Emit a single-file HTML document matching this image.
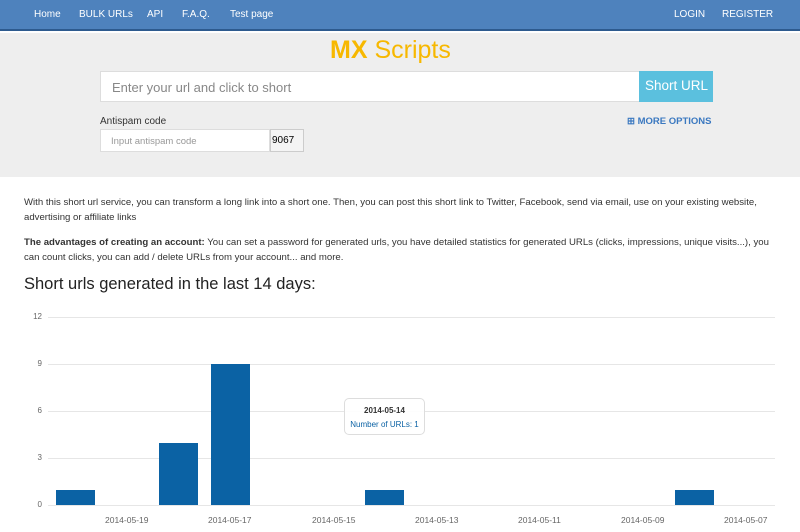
<!DOCTYPE html>
<html><head><meta charset="utf-8"><style>
*{margin:0;padding:0;box-sizing:border-box}
body{width:800px;height:532px;overflow:hidden;background:#fff;font-family:"Liberation Sans",Arial,sans-serif;position:relative}
.nav{position:absolute;left:0;top:0;width:800px;height:31px;background:#4e82bd;border-bottom:2px solid #2d5a8e}
.nav span{position:absolute;top:9px;color:#fff;font-size:10px;white-space:nowrap}
.hero{position:absolute;left:0;top:33px;width:800px;height:144px;background:#eeeeee}
.logo{position:absolute;left:330px;top:36px;font-size:25px;color:#f7b800;white-space:nowrap}
.inp{position:absolute;left:100px;top:71px;width:540px;height:31px;background:#fff;border:1px solid #ddd;font-size:13px;color:#888;padding:8px 11px}
.btn{position:absolute;left:639px;top:71px;width:74px;height:31px;background:#5bc0de;color:#fff;font-size:13.5px;padding:7px 6px;white-space:nowrap}
.small{position:absolute;font-size:10px;white-space:nowrap}
p{position:absolute;left:24px;font-size:9.6px;line-height:15px;color:#333;width:760px}
.gl{position:absolute;left:48px;width:727px;height:1px;background:#e6e6e6}
.yl{position:absolute;left:26px;width:16px;text-align:right;font-size:8px;color:#666}
.bar{position:absolute;background:#0b62a4;width:39px;bottom:27px}
.xl{position:absolute;top:515px;font-size:8.5px;color:#666}
</style></head><body>
<div class="nav">
<span style="left:34px">Home</span><span style="left:79px">BULK URLs</span><span style="left:147px">API</span><span style="left:182px">F.A.Q.</span><span style="left:230px">Test page</span>
<span style="left:674px">LOGIN</span><span style="left:722px">REGISTER</span>
</div>
<div class="hero"></div>
<div class="logo"><b style="font-weight:900">MX</b> Scripts</div>
<div class="inp">Enter your url and click to short</div>
<div class="btn">Short URL</div>
<div class="small" style="left:100px;top:116px;color:#333">Antispam code</div>
<div class="small" style="left:100px;top:129px;width:170px;height:23px;background:#fff;border:1px solid #ddd;color:#999;padding:6px 10px;font-size:9.5px">Input antispam code</div>
<div class="small" style="left:270px;top:129px;width:34px;height:23px;background:#f4f4f4;border:1px solid #ccc;font-size:10px;padding:5px 1px;color:#000">9067</div>
<div class="small" style="left:627px;top:116px;color:#3a78c0;font-weight:bold;font-size:9.5px">⊞ MORE OPTIONS</div>
<p style="top:195px">With this short url service, you can transform a long link into a short one. Then, you can post this short link to Twitter, Facebook, send via email, use on your existing website, advertising or affiliate links</p>
<p style="top:235px"><b>The advantages of creating an account:</b> You can set a password for generated urls, you have detailed statistics for generated URLs (clicks, impressions, unique visits...), you can count clicks, you can add / delete URLs from your account... and more.</p>
<div style="position:absolute;left:24px;top:275px;font-size:16.5px;color:#222">Short urls generated in the last 14 days:</div>
<div class="gl" style="top:317px"></div><div class="gl" style="top:364px"></div><div class="gl" style="top:411px"></div><div class="gl" style="top:458px"></div><div class="gl" style="top:505px"></div>
<div class="yl" style="top:312px">12</div><div class="yl" style="top:359px">9</div><div class="yl" style="top:406px">6</div><div class="yl" style="top:453px">3</div><div class="yl" style="top:500px">0</div>
<div class="bar" style="left:56px;height:15px"></div>
<div class="bar" style="left:159px;height:62px"></div>
<div class="bar" style="left:211px;height:141px"></div>
<div class="bar" style="left:365px;height:15px"></div>
<div class="bar" style="left:675px;height:15px"></div>
<div class="xl" style="left:105px">2014-05-19</div><div class="xl" style="left:208px">2014-05-17</div><div class="xl" style="left:312px">2014-05-15</div><div class="xl" style="left:415px">2014-05-13</div><div class="xl" style="left:518px">2014-05-11</div><div class="xl" style="left:621px">2014-05-09</div><div class="xl" style="left:724px">2014-05-07</div>
<div style="position:absolute;left:344px;top:398px;width:81px;height:37px;background:rgba(255,255,255,.9);border:1px solid #ddd;border-radius:5px;text-align:center;font-size:8px;padding-top:7px">
<b style="color:#333">2014-05-14</b><div style="color:#0b62a4;margin-top:5px">Number of URLs: 1</div></div>
</body></html>
